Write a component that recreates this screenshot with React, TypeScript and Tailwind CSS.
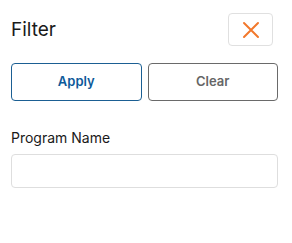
import React from "react";

const App = () => {
  return (
    <div
      className="w-[292px] h-[243px] bg-white px-[11px] pt-[13px]"
      style={{ fontFamily: "Inter, 'Noto Sans', sans-serif" }}
    >
      {/* Header */}
      <div className="flex items-center justify-between pr-[8px]">
        <h2 className="text-[19px] leading-none text-[#1a1a1a] font-normal">Filter</h2>
        <button className="w-[45px] h-[33px] border border-[#e0e0e0] rounded-[4px] flex items-center justify-center bg-white">
          <svg width="18" height="18" viewBox="0 0 18 18">
            <path d="M2 2 L16 16 M16 2 L2 16" stroke="#f2782c" strokeWidth="2" strokeLinecap="round" />
          </svg>
        </button>
      </div>

      {/* Actions */}
      <div className="flex gap-[6px] mt-[17px] pr-[3px]">
        <button className="flex-1 h-[38px] border border-[#1b5f93] rounded-[4px] text-[#0d5a9a] text-[13px] font-semibold">
          Apply
        </button>
        <button className="flex-1 h-[38px] border border-[#6a6a6a] rounded-[4px] text-[#666666] text-[13px] font-semibold">
          Clear
        </button>
      </div>

      {/* Program name */}
      <div className="mt-[29px] pr-[3px]">
        <label className="block text-[14px] leading-[16px] text-[#1a1a1a]">Program Name</label>
        <input
          type="text"
          className="block mt-[8px] w-full h-[34px] border border-[#dedede] rounded-[4px] outline-none px-2"
        />
      </div>
    </div>
  );
};

export default App;
